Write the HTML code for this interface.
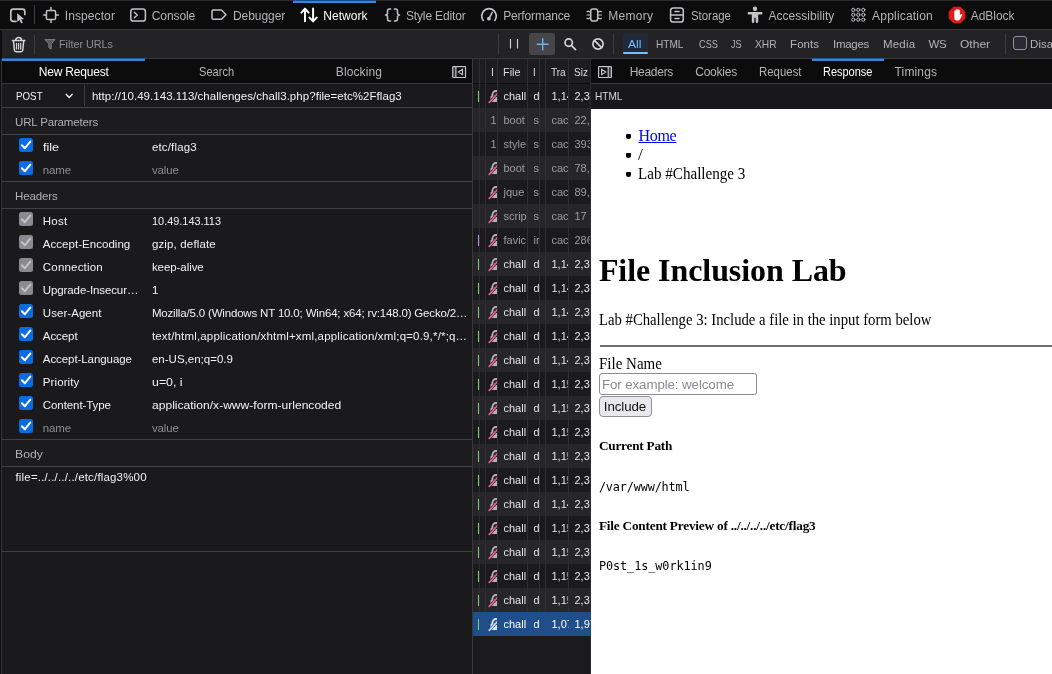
<!DOCTYPE html>
<html lang="en">
<head>
<meta charset="utf-8">
<title>DevTools - Network</title>
<style>
*{box-sizing:border-box;margin:0;padding:0}
html,body{width:1052px;height:674px;overflow:hidden;background:#1a1a1c}
body{position:relative;font-family:"Liberation Sans","DejaVu Sans",sans-serif;font-size:12px;color:#b1b1b3}
.abs{position:absolute}
.t{position:absolute;white-space:nowrap;line-height:16px;height:16px}
svg{position:absolute;overflow:visible}
#topbar{left:0;top:0;width:1052px;height:30px;background:#0c0c0d;border-bottom:1px solid #38383d}
#tb2{left:0;top:30px;width:1052px;height:29px;background:#232326;border-bottom:1px solid #38383d}
.vsep{position:absolute;width:1px;background:#3d3d42}
.hl{position:absolute;height:1px;background:#414146}
.bl{position:absolute;height:2px;background:#2f73c9}
#left{left:0;top:59px;width:473px;height:615px;background:#1a1a1c;border-left:1px solid #0d0d0e;border-right:1px solid #38383d}
.tabrow{position:absolute;top:59px;height:25px;background:#0c0c0d;border-bottom:1px solid #38383d}
.sec{position:absolute;left:2px;width:470px;background:#1c1c1f}
.cb{position:absolute;left:19px;width:14px;height:14px;border-radius:2.5px;background:#0b6be3}
.cb.dis{background:#8a8a90}
.cb svg{left:0;top:0}
#list{left:473px;top:59px;width:118px;height:615px;background:#1b1b1e;overflow:hidden}
.row{position:absolute;left:0;width:118px;height:24px;color:#e4e4e7;font-size:11px;background:#1b1b1e}
svg.lk{overflow:hidden}
.row.odd{background:#262629}
.row.dim{color:#9d9da2}
.row.sel{background:#204e8a;color:#fff}
.row.odd{--rb:#262629}
.row.sel{--rb:#204e8a;--lk:#dfe9f7;--sl:#c9dcf5;z-index:3}
.c{position:absolute;top:0;height:24px;overflow:hidden;white-space:nowrap;line-height:24px}
.c i{font-style:normal;position:absolute;top:0}
.cl{position:absolute;top:59px;width:1px;background:#2e2e32}
.g{position:absolute;left:4.8px;top:7px;width:1.7px;height:11px;background:#7fcf74}
.g.p{background:#c48af2}
#right{left:591px;top:59px;width:461px;height:615px;background:#1a1a1c}
#page{left:591px;top:109px;width:461px;height:565px;background:#fff;color:#000;font-family:"Liberation Serif","DejaVu Serif",serif;font-size:16px;overflow:hidden}
#page .p{position:absolute;white-space:nowrap;line-height:19px}
#page .b{font-weight:bold;font-size:13.28px}
#page .m{font-family:"DejaVu Sans Mono","Liberation Mono",monospace;font-size:11.8px}
.dot{position:absolute;left:34.8px;width:5.5px;height:5.3px;border-radius:1px 1px 2.6px 2.6px;background:#000}
</style>
</head>
<body>
<div id="app" style="position:absolute;left:0;top:0;width:1052px;height:674px;will-change:transform">
<div id="topbar" class="abs"></div>
<div id="tb2" class="abs"></div>
<div id="left" class="abs"></div>
<div id="list" class="abs">
<div class="row" style="top:25px"><div class="g"></div><svg class="lk" style="left:13px;top:0" width="11.3" height="24" viewBox="0 0 11.3 24"><use href="#lock"/></svg><div class="c" style="left:25px;width:30px"><i style="left:5.5px">chall</i></div><div class="c" style="left:55px;width:12px"><i style="left:5.5px">d</i></div><div class="c" style="left:73px;width:23px"><i style="left:5.5px">1,14 kB</i></div><div class="c" style="left:96px;width:22px"><i style="left:5.5px">2,37 kB</i></div></div>
<div class="row odd dim" style="top:49px"><div class="c" style="left:13px;width:12px"><i style="left:4.6px">10.49</i></div><div class="c" style="left:25px;width:30px"><i style="left:5.5px">boot</i></div><div class="c" style="left:55px;width:12px"><i style="left:5.5px">st</i></div><div class="c" style="left:73px;width:23px"><i style="left:5.5px">cac</i></div><div class="c" style="left:96px;width:22px"><i style="left:5.5px">22,</i></div></div>
<div class="row dim" style="top:73px"><div class="c" style="left:13px;width:12px"><i style="left:4.6px">10.49</i></div><div class="c" style="left:25px;width:30px"><i style="left:5.5px">style</i></div><div class="c" style="left:55px;width:12px"><i style="left:5.5px">st</i></div><div class="c" style="left:73px;width:23px"><i style="left:5.5px">cac</i></div><div class="c" style="left:96px;width:22px"><i style="left:5.5px">393</i></div></div>
<div class="row odd dim" style="top:97px"><svg class="lk" style="left:13px;top:0" width="11.3" height="24" viewBox="0 0 11.3 24"><use href="#lock"/></svg><div class="c" style="left:25px;width:30px"><i style="left:5.5px">boot</i></div><div class="c" style="left:55px;width:12px"><i style="left:5.5px">s</i></div><div class="abs" style="left:71.5px;top:15px;width:1.5px;height:1.5px;background:#9d9da2"></div><div class="c" style="left:73px;width:23px"><i style="left:5.5px">cac</i></div><div class="c" style="left:96px;width:22px"><i style="left:5.5px">78,</i></div></div>
<div class="row dim" style="top:121px"><svg class="lk" style="left:13px;top:0" width="11.3" height="24" viewBox="0 0 11.3 24"><use href="#lock"/></svg><div class="c" style="left:25px;width:30px"><i style="left:5.5px">jque</i></div><div class="c" style="left:55px;width:12px"><i style="left:5.5px">s</i></div><div class="abs" style="left:71.5px;top:15px;width:1.5px;height:1.5px;background:#9d9da2"></div><div class="c" style="left:73px;width:23px"><i style="left:5.5px">cac</i></div><div class="c" style="left:96px;width:22px"><i style="left:5.5px">89,</i></div></div>
<div class="row odd dim" style="top:145px"><svg class="lk" style="left:13px;top:0" width="11.3" height="24" viewBox="0 0 11.3 24"><use href="#lock"/></svg><div class="c" style="left:25px;width:30px"><i style="left:5.5px">scrip</i></div><div class="c" style="left:55px;width:12px"><i style="left:5.5px">s</i></div><div class="abs" style="left:71.5px;top:15px;width:1.5px;height:1.5px;background:#9d9da2"></div><div class="c" style="left:73px;width:23px"><i style="left:5.5px">cac</i></div><div class="c" style="left:96px;width:22px"><i style="left:5.5px">17</i></div></div>
<div class="row dim" style="top:169px"><div class="g p"></div><svg class="lk" style="left:13px;top:0" width="11.3" height="24" viewBox="0 0 11.3 24"><use href="#lock"/></svg><div class="c" style="left:25px;width:30px"><i style="left:5.5px">favic</i></div><div class="c" style="left:55px;width:12px"><i style="left:5.5px">ir</i></div><div class="c" style="left:73px;width:23px"><i style="left:5.5px">cac</i></div><div class="c" style="left:96px;width:22px"><i style="left:5.5px">286</i></div></div>
<div class="row odd" style="top:193px"><div class="g"></div><svg class="lk" style="left:13px;top:0" width="11.3" height="24" viewBox="0 0 11.3 24"><use href="#lock"/></svg><div class="c" style="left:25px;width:30px"><i style="left:5.5px">chall</i></div><div class="c" style="left:55px;width:12px"><i style="left:5.5px">d</i></div><div class="c" style="left:73px;width:23px"><i style="left:5.5px">1,14 kB</i></div><div class="c" style="left:96px;width:22px"><i style="left:5.5px">2,37 kB</i></div></div>
<div class="row" style="top:217px"><div class="g"></div><svg class="lk" style="left:13px;top:0" width="11.3" height="24" viewBox="0 0 11.3 24"><use href="#lock"/></svg><div class="c" style="left:25px;width:30px"><i style="left:5.5px">chall</i></div><div class="c" style="left:55px;width:12px"><i style="left:5.5px">d</i></div><div class="c" style="left:73px;width:23px"><i style="left:5.5px">1,14 kB</i></div><div class="c" style="left:96px;width:22px"><i style="left:5.5px">2,37 kB</i></div></div>
<div class="row odd" style="top:241px"><div class="g"></div><svg class="lk" style="left:13px;top:0" width="11.3" height="24" viewBox="0 0 11.3 24"><use href="#lock"/></svg><div class="c" style="left:25px;width:30px"><i style="left:5.5px">chall</i></div><div class="c" style="left:55px;width:12px"><i style="left:5.5px">d</i></div><div class="c" style="left:73px;width:23px"><i style="left:5.5px">1,14 kB</i></div><div class="c" style="left:96px;width:22px"><i style="left:5.5px">2,37 kB</i></div></div>
<div class="row" style="top:265px"><div class="g"></div><svg class="lk" style="left:13px;top:0" width="11.3" height="24" viewBox="0 0 11.3 24"><use href="#lock"/></svg><div class="c" style="left:25px;width:30px"><i style="left:5.5px">chall</i></div><div class="c" style="left:55px;width:12px"><i style="left:5.5px">d</i></div><div class="c" style="left:73px;width:23px"><i style="left:5.5px">1,14 kB</i></div><div class="c" style="left:96px;width:22px"><i style="left:5.5px">2,37 kB</i></div></div>
<div class="row odd" style="top:289px"><div class="g"></div><svg class="lk" style="left:13px;top:0" width="11.3" height="24" viewBox="0 0 11.3 24"><use href="#lock"/></svg><div class="c" style="left:25px;width:30px"><i style="left:5.5px">chall</i></div><div class="c" style="left:55px;width:12px"><i style="left:5.5px">d</i></div><div class="c" style="left:73px;width:23px"><i style="left:5.5px">1,14 kB</i></div><div class="c" style="left:96px;width:22px"><i style="left:5.5px">2,37 kB</i></div></div>
<div class="row" style="top:313px"><div class="g"></div><svg class="lk" style="left:13px;top:0" width="11.3" height="24" viewBox="0 0 11.3 24"><use href="#lock"/></svg><div class="c" style="left:25px;width:30px"><i style="left:5.5px">chall</i></div><div class="c" style="left:55px;width:12px"><i style="left:5.5px">d</i></div><div class="c" style="left:73px;width:23px"><i style="left:5.5px">1,15 kB</i></div><div class="c" style="left:96px;width:22px"><i style="left:5.5px">2,34 kB</i></div></div>
<div class="row odd" style="top:337px"><div class="g"></div><svg class="lk" style="left:13px;top:0" width="11.3" height="24" viewBox="0 0 11.3 24"><use href="#lock"/></svg><div class="c" style="left:25px;width:30px"><i style="left:5.5px">chall</i></div><div class="c" style="left:55px;width:12px"><i style="left:5.5px">d</i></div><div class="c" style="left:73px;width:23px"><i style="left:5.5px">1,15 kB</i></div><div class="c" style="left:96px;width:22px"><i style="left:5.5px">2,34 kB</i></div></div>
<div class="row" style="top:361px"><div class="g"></div><svg class="lk" style="left:13px;top:0" width="11.3" height="24" viewBox="0 0 11.3 24"><use href="#lock"/></svg><div class="c" style="left:25px;width:30px"><i style="left:5.5px">chall</i></div><div class="c" style="left:55px;width:12px"><i style="left:5.5px">d</i></div><div class="c" style="left:73px;width:23px"><i style="left:5.5px">1,15 kB</i></div><div class="c" style="left:96px;width:22px"><i style="left:5.5px">2,37 kB</i></div></div>
<div class="row odd" style="top:385px"><div class="g"></div><svg class="lk" style="left:13px;top:0" width="11.3" height="24" viewBox="0 0 11.3 24"><use href="#lock"/></svg><div class="c" style="left:25px;width:30px"><i style="left:5.5px">chall</i></div><div class="c" style="left:55px;width:12px"><i style="left:5.5px">d</i></div><div class="c" style="left:73px;width:23px"><i style="left:5.5px">1,15 kB</i></div><div class="c" style="left:96px;width:22px"><i style="left:5.5px">2,34 kB</i></div></div>
<div class="row" style="top:409px"><div class="g"></div><svg class="lk" style="left:13px;top:0" width="11.3" height="24" viewBox="0 0 11.3 24"><use href="#lock"/></svg><div class="c" style="left:25px;width:30px"><i style="left:5.5px">chall</i></div><div class="c" style="left:55px;width:12px"><i style="left:5.5px">d</i></div><div class="c" style="left:73px;width:23px"><i style="left:5.5px">1,15 kB</i></div><div class="c" style="left:96px;width:22px"><i style="left:5.5px">2,34 kB</i></div></div>
<div class="row odd" style="top:433px"><div class="g"></div><svg class="lk" style="left:13px;top:0" width="11.3" height="24" viewBox="0 0 11.3 24"><use href="#lock"/></svg><div class="c" style="left:25px;width:30px"><i style="left:5.5px">chall</i></div><div class="c" style="left:55px;width:12px"><i style="left:5.5px">d</i></div><div class="c" style="left:73px;width:23px"><i style="left:5.5px">1,14 kB</i></div><div class="c" style="left:96px;width:22px"><i style="left:5.5px">2,37 kB</i></div></div>
<div class="row" style="top:457px"><div class="g"></div><svg class="lk" style="left:13px;top:0" width="11.3" height="24" viewBox="0 0 11.3 24"><use href="#lock"/></svg><div class="c" style="left:25px;width:30px"><i style="left:5.5px">chall</i></div><div class="c" style="left:55px;width:12px"><i style="left:5.5px">d</i></div><div class="c" style="left:73px;width:23px"><i style="left:5.5px">1,15 kB</i></div><div class="c" style="left:96px;width:22px"><i style="left:5.5px">2,37 kB</i></div></div>
<div class="row odd" style="top:481px"><div class="g"></div><svg class="lk" style="left:13px;top:0" width="11.3" height="24" viewBox="0 0 11.3 24"><use href="#lock"/></svg><div class="c" style="left:25px;width:30px"><i style="left:5.5px">chall</i></div><div class="c" style="left:55px;width:12px"><i style="left:5.5px">d</i></div><div class="c" style="left:73px;width:23px"><i style="left:5.5px">1,15 kB</i></div><div class="c" style="left:96px;width:22px"><i style="left:5.5px">2,34 kB</i></div></div>
<div class="row" style="top:505px"><div class="g"></div><svg class="lk" style="left:13px;top:0" width="11.3" height="24" viewBox="0 0 11.3 24"><use href="#lock"/></svg><div class="c" style="left:25px;width:30px"><i style="left:5.5px">chall</i></div><div class="c" style="left:55px;width:12px"><i style="left:5.5px">d</i></div><div class="c" style="left:73px;width:23px"><i style="left:5.5px">1,15 kB</i></div><div class="c" style="left:96px;width:22px"><i style="left:5.5px">2,34 kB</i></div></div>
<div class="row odd" style="top:529px"><div class="g"></div><svg class="lk" style="left:13px;top:0" width="11.3" height="24" viewBox="0 0 11.3 24"><use href="#lock"/></svg><div class="c" style="left:25px;width:30px"><i style="left:5.5px">chall</i></div><div class="c" style="left:55px;width:12px"><i style="left:5.5px">d</i></div><div class="c" style="left:73px;width:23px"><i style="left:5.5px">1,15 kB</i></div><div class="c" style="left:96px;width:22px"><i style="left:5.5px">2,37 kB</i></div></div>
<div class="row sel" style="top:553px"><div class="g"></div><svg class="lk" style="left:13px;top:0" width="11.3" height="24" viewBox="0 0 11.3 24"><use href="#lock"/></svg><div class="c" style="left:25px;width:30px"><i style="left:5.5px">chall</i></div><div class="c" style="left:55px;width:12px"><i style="left:5.5px">d</i></div><div class="c" style="left:73px;width:23px"><i style="left:5.5px">1,07 kB</i></div><div class="c" style="left:96px;width:22px"><i style="left:5.5px">1,97 kB</i></div></div>
</div>
<div id="right" class="abs"></div>

<!-- top toolbar decorations -->
<div class="abs" style="left:0;top:0;width:1052px;height:1px;background:#2a2a2d"></div>
<div class="abs" style="left:293px;top:0;width:83px;height:1px;background:#0d4a90"></div>
<div class="bl" style="left:293px;top:1px;width:83px;background:#3d85d3"></div>
<div class="abs" style="left:0;top:30px;width:1.500px;height:29px;background:#0d0d0e"></div>
<div class="vsep" style="left:34px;top:5px;height:19px"></div>
<!-- toolbar 2 decorations -->
<div class="vsep" style="left:34px;top:35px;height:19px"></div>
<div class="vsep" style="left:498px;top:34px;height:20px"></div>
<div class="vsep" style="left:613px;top:34px;height:20px"></div>
<div class="vsep" style="left:1005px;top:34px;height:20px"></div>
<div class="abs" style="left:529px;top:33px;width:26px;height:22px;border-radius:3px;background:#45454a"></div>
<div class="abs" style="left:623px;top:34px;width:25px;height:19px;background:#212a3a;border-radius:2px"></div>
<div class="abs" style="left:623px;top:52px;width:25px;height:2px;background:#75bfff;border-radius:1px"></div>
<div class="abs" style="left:1013px;top:36px;width:14px;height:14px;border:1.5px solid #8f8f9d;border-radius:3px;background:#2b2a33"></div>

<!-- left panel -->
<div class="tabrow" style="left:2px;width:470px"></div>
<div class="abs" style="left:1px;top:59px;width:1px;height:615px;background:#36363a"></div>
<div class="abs" style="left:2px;top:58px;width:143px;height:1px;background:#1c5aa6"></div>
<div class="bl" style="left:2px;top:59px;width:143px;background:#3d85d3"></div>
<div class="vsep" style="left:84px;top:85px;height:21px"></div>
<div class="hl" style="left:2px;width:470px;top:107px"></div>
<div class="sec" style="top:108px;height:26px"></div>
<div class="hl" style="left:2px;width:470px;top:134px"></div>
<div class="hl" style="left:2px;width:470px;top:181px"></div>
<div class="sec" style="top:182px;height:26px"></div>
<div class="hl" style="left:2px;width:470px;top:208px"></div>
<div class="hl" style="left:2px;width:470px;top:439px"></div>
<div class="sec" style="top:440px;height:26px"></div>
<div class="hl" style="left:2px;width:470px;top:466px"></div>
<div class="hl" style="left:2px;width:470px;top:551px"></div>

<div class="cb" style="top:138px"><svg width="14" height="14" viewBox="0 0 14 14"><path d="M2.900 7.300l3 2.900 5.400-6.600" fill="none" stroke="#ffffff" stroke-width="2" stroke-linecap="round" stroke-linejoin="round"/></svg></div>
<div class="cb" style="top:161px"><svg width="14" height="14" viewBox="0 0 14 14"><path d="M2.900 7.300l3 2.900 5.400-6.600" fill="none" stroke="#ffffff" stroke-width="2" stroke-linecap="round" stroke-linejoin="round"/></svg></div>
<div class="cb dis" style="top:212px"><svg width="14" height="14" viewBox="0 0 14 14"><path d="M2.900 7.300l3 2.900 5.400-6.600" fill="none" stroke="#c2c2c8" stroke-width="2" stroke-linecap="round" stroke-linejoin="round"/></svg></div>
<div class="cb dis" style="top:235px"><svg width="14" height="14" viewBox="0 0 14 14"><path d="M2.900 7.300l3 2.900 5.400-6.600" fill="none" stroke="#c2c2c8" stroke-width="2" stroke-linecap="round" stroke-linejoin="round"/></svg></div>
<div class="cb dis" style="top:258px"><svg width="14" height="14" viewBox="0 0 14 14"><path d="M2.900 7.300l3 2.900 5.400-6.600" fill="none" stroke="#c2c2c8" stroke-width="2" stroke-linecap="round" stroke-linejoin="round"/></svg></div>
<div class="cb dis" style="top:281px"><svg width="14" height="14" viewBox="0 0 14 14"><path d="M2.900 7.300l3 2.900 5.400-6.600" fill="none" stroke="#c2c2c8" stroke-width="2" stroke-linecap="round" stroke-linejoin="round"/></svg></div>
<div class="cb" style="top:304px"><svg width="14" height="14" viewBox="0 0 14 14"><path d="M2.900 7.300l3 2.900 5.400-6.600" fill="none" stroke="#ffffff" stroke-width="2" stroke-linecap="round" stroke-linejoin="round"/></svg></div>
<div class="cb" style="top:327px"><svg width="14" height="14" viewBox="0 0 14 14"><path d="M2.900 7.300l3 2.900 5.400-6.600" fill="none" stroke="#ffffff" stroke-width="2" stroke-linecap="round" stroke-linejoin="round"/></svg></div>
<div class="cb" style="top:350px"><svg width="14" height="14" viewBox="0 0 14 14"><path d="M2.900 7.300l3 2.900 5.400-6.600" fill="none" stroke="#ffffff" stroke-width="2" stroke-linecap="round" stroke-linejoin="round"/></svg></div>
<div class="cb" style="top:373px"><svg width="14" height="14" viewBox="0 0 14 14"><path d="M2.900 7.300l3 2.900 5.400-6.600" fill="none" stroke="#ffffff" stroke-width="2" stroke-linecap="round" stroke-linejoin="round"/></svg></div>
<div class="cb" style="top:396px"><svg width="14" height="14" viewBox="0 0 14 14"><path d="M2.900 7.300l3 2.900 5.400-6.600" fill="none" stroke="#ffffff" stroke-width="2" stroke-linecap="round" stroke-linejoin="round"/></svg></div>
<div class="cb" style="top:419px"><svg width="14" height="14" viewBox="0 0 14 14"><path d="M2.900 7.300l3 2.900 5.400-6.600" fill="none" stroke="#ffffff" stroke-width="2" stroke-linecap="round" stroke-linejoin="round"/></svg></div>

<!-- list header -->
<div class="abs" style="left:473px;top:59px;width:118px;height:24px;background:#1d1d20"></div>
<div class="hl" style="left:473px;width:118px;top:83px;background:#0f0f10"></div>
<div class="cl" style="left:479px;height:553px"></div>
<div class="cl" style="left:485px;height:553px"></div>
<div class="cl" style="left:497px;height:553px"></div>
<div class="cl" style="left:527px;height:553px"></div>
<div class="cl" style="left:539px;height:553px"></div>
<div class="cl" style="left:545px;height:553px"></div>
<div class="cl" style="left:568px;height:553px"></div>


<!-- right panel -->
<div class="tabrow" style="left:591px;width:461px"></div>
<div class="abs" style="left:812px;top:58px;width:72px;height:1px;background:#1c5aa6"></div>
<div class="bl" style="left:812px;top:59px;width:72px;background:#3d85d3"></div>
<div class="abs" style="left:591px;top:84px;width:461px;height:25px;background:#18181a"></div>
<div class="cl" style="left:590px;height:615px;background:#2c2c30"></div>

<div id="page" class="abs">
<div class="dot" style="top:24.9px"></div>
<div class="dot" style="top:43.9px"></div>
<div class="dot" style="top:62.9px"></div>
<div class="abs" style="left:8.5px;top:236px;width:460px;height:2px;background:#6e6e6e"></div>
<div class="abs" style="left:8px;top:264px;width:158px;height:21.5px;border:1px solid #8c8c96;border-radius:3px;background:#fff"></div>
<div class="abs" style="left:8px;top:286.5px;width:53px;height:21px;border:1px solid #8f8f9d;border-radius:4px;background:#e9e9ed"></div>
</div>

<svg width="0" height="0" style="left:0;top:0"><defs>
<g id="lock"><path d="M6.500 12V10.500a3.500 3.500 0 0 1 7 0V12" fill="none" style="stroke:var(--lk,#b4b4b8)" stroke-width="1.800"/><rect x="4.500" y="11.800" width="11" height="6.200" rx="1" style="fill:var(--lk,#b4b4b8)"/><path d="M3.300 18.400L11.800 9.200" style="stroke:var(--rb,#1b1b1e)" stroke-width="2.800"/><path d="M3.300 18.400L11.800 9.200" style="stroke:var(--sl,#ee5a8e)" stroke-width="1.700" stroke-linecap="round"/></g>
</defs></svg>
<svg width="1052" height="674" viewBox="0 0 1052 674" style="left:0;top:0;pointer-events:none" fill="none" stroke-linecap="round" stroke-linejoin="round">
<g stroke="#c4c4c8" stroke-width="1.5">
<!-- pick -->
<path d="M16 21.3H13.3a2.5 2.5 0 0 1-2.500-2.500V11.600a2.500 2.500 0 0 1 2.500-2.500h9a2.500 2.500 0 0 1 2.500 2.500V14.500" stroke-width="1.700"/>
<path d="M17.2 13.3v8.8l2.3-2 1.700 3.300 1.600-.850-1.600-3.200h3.100z" fill="#c4c4c8" stroke="none"/>
<!-- inspector -->
<rect x="46.4" y="10.4" width="9.2" height="9.2" rx="1.6"/>
<path d="M43.6 15h2M56.4 15h2M51 7.6v2M51 20.4v2"/>
<!-- console -->
<rect x="130.8" y="9.1" width="14.6" height="11.9" rx="2.6"/>
<path d="M134.3 12.3l3 2.7-3 2.7"/>
<!-- debugger -->
<path d="M213.3 10.1h8.2l4.5 4.6-4.5 4.6h-8.2a1.3 1.3 0 0 1-1.3-1.3v-6.6a1.3 1.3 0 0 1 1.3-1.3z"/>
<!-- style editor -->
<path d="M390.6 9.1h-1.1a2 2 0 0 0-2 2v1.9a2 2 0 0 1-2 2 2 2 0 0 1 2 2v1.9a2 2 0 0 0 2 2h1.1"/>
<path d="M394.4 9.1h1.1a2 2 0 0 1 2 2v1.9a2 2 0 0 0 2 2 2 2 0 0 0-2 2v1.9a2 2 0 0 1-2 2h-1.1"/>
<!-- performance -->
<path d="M483.200 20.400A7.300 7.300 0 1 1 494.800 20.400" stroke-width="1.700"/>
<path d="M489 18.600l3.200-6.200"/>
<circle cx="488.9" cy="18.7" r="1.9" fill="#c4c4c8" stroke="none"/>
<!-- memory -->
<rect x="590.7" y="9.1" width="7" height="11.9" rx="2.2"/>
<path d="M587 11.6q1.8-.6 3 .3M587 15h3M587 18.4q1.8.6 3-.3M601.400 11.6q-1.800-.6-3 .3M601.400 15h-3M601.400 18.400q-1.800.6-3-.3" stroke-width="1.2"/>
<!-- storage -->
<rect x="670.6" y="7.9" width="12.7" height="14.2" rx="2.6"/>
<path d="M670.600 15h12.700M675 11.500h4M675 18.500h4"/>
<!-- accessibility -->
<g fill="#c4c4c8" stroke="none">
<circle cx="755" cy="8.700" r="2.200"/>
<path d="M748.800 11.900h12.400a1.200 1.200 0 0 1 0 2.500h-3v7.400a1.250 1.250 0 0 1-2.500 0v-4h-1.400v4a1.250 1.250 0 0 1-2.500 0v-7.400h-3a1.200 1.200 0 0 1 0-2.500z"/>
</g>
<!-- application -->
<g stroke-width="1">
<circle cx="853.300" cy="9.900" r="1.600"/><circle cx="858.300" cy="9.900" r="1.600"/><circle cx="863.300" cy="9.900" r="1.600"/>
<circle cx="853.300" cy="14.800" r="1.600"/><circle cx="858.300" cy="14.800" r="1.600"/><circle cx="863.300" cy="14.800" r="1.600"/>
<circle cx="853.300" cy="19.700" r="1.600"/><circle cx="858.300" cy="19.700" r="1.600"/><circle cx="863.300" cy="19.700" r="1.600"/>
</g>
</g>
<!-- network (active) -->
<g stroke="#ffffff" stroke-width="2">
<path d="M305 21.300V8.800M301.400 12.600l3.600-3.800 3.600 3.800"/>
<path d="M313.100 8.600v12.500M309.500 17.600l3.600 3.800 3.600-3.800"/>
</g>
<!-- adblock -->
<path d="M953.700 7h6.600l4.700 4.700v6.700l-4.700 4.700h-6.600l-4.700-4.700v-6.700z" fill="#e01b1b" stroke="#e01b1b" stroke-width="0.600"/>
<path d="M954.300 15.500v-4.300a.7.700 0 0 1 1.400 0v-1.300a.7.700 0 0 1 1.400 0v-.3a.7.700 0 0 1 1.400 0v.8a.7.700 0 0 1 1.400 0v5.200l1-1.500a.8.800 0 0 1 1.300.8l-2.200 4.300a2.500 2.500 0 0 1-2.200 1.400h-1.300a2.500 2.500 0 0 1-2.200-2.500z" fill="#fff" stroke="none"/>
<!-- toolbar2 icons -->
<g stroke="#d4d4d8" stroke-width="1.500">
<path d="M12.400 40.500h12.400M15.700 40.200a2.900 2.700 0 0 1 5.800 0"/>
<path d="M13.500 41l.9 9a1.900 1.900 0 0 0 1.900 1.700h4.600a1.900 1.900 0 0 0 1.900-1.700l.9-9"/>
<path d="M16.500 43.300v5.800M18.600 43.300v5.800M20.700 43.300v5.800" stroke-width="1.200"/>
</g>
<path d="M45.200 39.600h9.700l-3.700 4.500v5l-2.400-1.500v-3.500z" fill="#58585d" stroke="#85858a" stroke-width="0.9"/>
<path d="M510.500 39v9.500M517.500 39v9.500" stroke="#d0d0d4" stroke-width="1.150" stroke-linecap="butt"/>
<path d="M537.300 44.300h10.800M542.700 38.700v11.200" stroke="#6fb1f2" stroke-width="1.400"/>
<g stroke="#d4d4d8" stroke-width="1.700">
<circle cx="568.700" cy="42.600" r="3.700"/><path d="M571.600 45.600l4 4.100"/>
<circle cx="598" cy="44" r="5.100"/><path d="M594.400 40.400l7.200 7.200"/>
</g>
<!-- chevron -->
<path d="M66.300 94.400l2.900 3.100 2.900-3.100" stroke="#e8e8ea" stroke-width="1.500"/>
<!-- sidebar toggles -->
<rect x="453" y="66.900" width="2.800" height="10.400" fill="#3a3a3f"/>
<rect x="608.300" y="66.900" width="2.800" height="10.400" fill="#3a3a3f"/>
<g stroke="#c4c4c8" stroke-width="1.200" stroke-linejoin="miter">
<rect x="452.700" y="66.600" width="12.800" height="10.900" rx="0.700"/><path d="M455.900 67v10.200M462.500 69.300v5.400l-4.200-2.700z"/>
<rect x="598.600" y="66.600" width="12.800" height="10.900" rx="0.700"/><path d="M608.200 67v10.200M601.600 69.300v5.400l4.200-2.700z"/>
</g>
</svg>

<span class="t" style="left:64.7px;top:8.1px;font-size:12px;color:#b4b4b7;letter-spacing:0.105px;">Inspector</span>
<span class="t" style="left:151.8px;top:8.1px;font-size:12px;color:#b4b4b7;letter-spacing:-0.090px;">Console</span>
<span class="t" style="left:232.9px;top:8.1px;font-size:12px;color:#b4b4b7;letter-spacing:-0.040px;">Debugger</span>
<span class="t" style="left:323.2px;top:8.1px;font-size:12px;color:#ffffff;letter-spacing:0.055px;">Network</span>
<span class="t" style="left:406.0px;top:8.1px;font-size:12px;color:#b4b4b7;letter-spacing:-0.155px;">Style Editor</span>
<span class="t" style="left:503.2px;top:8.1px;font-size:12px;color:#b4b4b7;letter-spacing:-0.164px;">Performance</span>
<span class="t" style="left:608.3px;top:8.1px;font-size:12px;color:#b4b4b7;letter-spacing:0.293px;">Memory</span>
<span class="t" style="left:691.1px;top:8.1px;font-size:12px;color:#b4b4b7;transform:scaleX(0.949);transform-origin:0 50%;">Storage</span>
<span class="t" style="left:768.4px;top:8.1px;font-size:12px;color:#b4b4b7;letter-spacing:0.049px;">Accessibility</span>
<span class="t" style="left:872.1px;top:8.1px;font-size:12px;color:#b4b4b7;letter-spacing:0.198px;">Application</span>
<span class="t" style="left:970.7px;top:8.1px;font-size:12px;color:#b4b4b7;letter-spacing:-0.019px;">AdBlock</span>
<span class="t" style="left:58.8px;top:36.1px;font-size:11.5px;color:#8f8f94;transform:scaleX(0.939);transform-origin:0 50%;">Filter URLs</span>
<span class="t" style="left:628.4px;top:36.1px;font-size:11.5px;color:#75bfff;transform:scaleX(1.048);transform-origin:0 50%;">All</span>
<span class="t" style="left:656.3px;top:36.1px;font-size:11.5px;color:#b4b4b7;transform:scaleX(0.875);transform-origin:0 50%;">HTML</span>
<span class="t" style="left:698.5px;top:36.1px;font-size:11.5px;color:#b4b4b7;transform:scaleX(0.799);transform-origin:0 50%;">CSS</span>
<span class="t" style="left:730.5px;top:36.1px;font-size:11.5px;color:#b4b4b7;transform:scaleX(0.790);transform-origin:0 50%;">JS</span>
<span class="t" style="left:754.7px;top:36.1px;font-size:11.5px;color:#b4b4b7;transform:scaleX(0.894);transform-origin:0 50%;">XHR</span>
<span class="t" style="left:790.1px;top:36.1px;font-size:11.5px;color:#b4b4b7;letter-spacing:0.027px;">Fonts</span>
<span class="t" style="left:833.0px;top:36.1px;font-size:11.5px;color:#b4b4b7;letter-spacing:-0.270px;">Images</span>
<span class="t" style="left:882.9px;top:36.1px;font-size:11.5px;color:#b4b4b7;letter-spacing:0.254px;">Media</span>
<span class="t" style="left:928.5px;top:36.1px;font-size:11.5px;color:#b4b4b7;letter-spacing:-0.366px;">WS</span>
<span class="t" style="left:960.4px;top:36.1px;font-size:11.5px;color:#b4b4b7;transform:scaleX(1.046);transform-origin:0 50%;">Other</span>
<span class="t" style="left:1030.1px;top:36.1px;font-size:11.5px;color:#b4b4b7;">Disable Cache</span>
<span class="t" style="left:38.7px;top:64.1px;font-size:12px;color:#ffffff;letter-spacing:-0.195px;">New Request</span>
<span class="t" style="left:198.9px;top:64.1px;font-size:12px;color:#b4b4b7;transform:scaleX(0.923);transform-origin:0 50%;">Search</span>
<span class="t" style="left:335.8px;top:64.1px;font-size:12px;color:#b4b4b7;letter-spacing:0.105px;">Blocking</span>
<span class="t" style="left:15.9px;top:88.3px;font-size:11.5px;color:#f2f2f4;transform:scaleX(0.850);transform-origin:0 50%;">POST</span>
<span class="t" style="left:91.9px;top:88.3px;font-size:11.5px;color:#f2f2f4;letter-spacing:0.049px;">http://10.49.143.113/challenges/chall3.php?file=etc%2Fflag3</span>
<span class="t" style="left:15.0px;top:114.1px;font-size:11.5px;color:#b1b1b3;letter-spacing:-0.151px;">URL Parameters</span>
<span class="t" style="left:42.8px;top:139.3px;font-size:11.5px;color:#f2f2f4;transform:scaleX(1.095);transform-origin:0 50%;">file</span>
<span class="t" style="left:151.9px;top:139.3px;font-size:11.5px;color:#f2f2f4;letter-spacing:0.168px;">etc/flag3</span>
<span class="t" style="left:42.8px;top:162.3px;font-size:11.5px;color:#8e8e93;letter-spacing:-0.145px;">name</span>
<span class="t" style="left:151.9px;top:162.3px;font-size:11.5px;color:#8e8e93;letter-spacing:-0.140px;">value</span>
<span class="t" style="left:15.0px;top:188.1px;font-size:11.5px;color:#b1b1b3;letter-spacing:-0.110px;">Headers</span>
<span class="t" style="left:42.8px;top:213.1px;font-size:11.5px;color:#f2f2f4;letter-spacing:0.261px;">Host</span>
<span class="t" style="left:151.9px;top:213.1px;font-size:11.5px;color:#f2f2f4;transform:scaleX(0.949);transform-origin:0 50%;">10.49.143.113</span>
<span class="t" style="left:42.8px;top:236.1px;font-size:11.5px;color:#f2f2f4;letter-spacing:0.036px;">Accept-Encoding</span>
<span class="t" style="left:151.9px;top:236.1px;font-size:11.5px;color:#f2f2f4;letter-spacing:0.153px;">gzip, deflate</span>
<span class="t" style="left:42.8px;top:259.1px;font-size:11.5px;color:#f2f2f4;letter-spacing:0.191px;">Connection</span>
<span class="t" style="left:151.9px;top:259.1px;font-size:11.5px;color:#f2f2f4;letter-spacing:-0.062px;">keep-alive</span>
<span class="t" style="left:42.8px;top:282.1px;font-size:11.5px;color:#f2f2f4;letter-spacing:-0.104px;">Upgrade-Insecur…</span>
<span class="t" style="left:152.1px;top:282.1px;font-size:11.5px;color:#f2f2f4;">1</span>
<span class="t" style="left:42.8px;top:305.1px;font-size:11.5px;color:#f2f2f4;letter-spacing:0.053px;">User-Agent</span>
<span class="t" style="left:151.9px;top:305.1px;font-size:11.5px;color:#f2f2f4;letter-spacing:-0.173px;">Mozilla/5.0 (Windows NT 10.0; Win64; x64; rv:148.0) Gecko/2…</span>
<span class="t" style="left:42.8px;top:328.1px;font-size:11.5px;color:#f2f2f4;letter-spacing:-0.062px;">Accept</span>
<span class="t" style="left:151.9px;top:328.1px;font-size:11.5px;color:#f2f2f4;letter-spacing:0.175px;">text/html,application/xhtml+xml,application/xml;q=0.9,*/*;q…</span>
<span class="t" style="left:42.8px;top:351.1px;font-size:11.5px;color:#f2f2f4;letter-spacing:-0.070px;">Accept-Language</span>
<span class="t" style="left:151.9px;top:351.1px;font-size:11.5px;color:#f2f2f4;letter-spacing:0.015px;">en-US,en;q=0.9</span>
<span class="t" style="left:42.8px;top:374.1px;font-size:11.5px;color:#f2f2f4;letter-spacing:0.102px;">Priority</span>
<span class="t" style="left:151.9px;top:374.1px;font-size:11.5px;color:#f2f2f4;transform:scaleX(1.075);transform-origin:0 50%;">u=0, i</span>
<span class="t" style="left:42.8px;top:397.1px;font-size:11.5px;color:#f2f2f4;letter-spacing:-0.079px;">Content-Type</span>
<span class="t" style="left:151.9px;top:397.1px;font-size:11.5px;color:#f2f2f4;transform:scaleX(1.050);transform-origin:0 50%;">application/x-www-form-urlencoded</span>
<span class="t" style="left:42.8px;top:420.1px;font-size:11.5px;color:#8e8e93;letter-spacing:-0.145px;">name</span>
<span class="t" style="left:151.9px;top:420.1px;font-size:11.5px;color:#8e8e93;letter-spacing:-0.140px;">value</span>
<span class="t" style="left:15.0px;top:446.3px;font-size:11.5px;color:#b1b1b3;transform:scaleX(1.064);transform-origin:0 50%;">Body</span>
<span class="t" style="left:15.5px;top:469.3px;font-size:11.5px;color:#f2f2f4;letter-spacing:0.171px;">file=../../../../etc/flag3%00</span>
<span class="t" style="left:629.7px;top:64.1px;font-size:12px;color:#b4b4b7;letter-spacing:-0.280px;">Headers</span>
<span class="t" style="left:695.2px;top:64.1px;font-size:12px;color:#b4b4b7;letter-spacing:-0.223px;">Cookies</span>
<span class="t" style="left:759.1px;top:64.1px;font-size:12px;color:#b4b4b7;transform:scaleX(0.951);transform-origin:0 50%;">Request</span>
<span class="t" style="left:822.7px;top:64.1px;font-size:12px;color:#ffffff;transform:scaleX(0.914);transform-origin:0 50%;">Response</span>
<span class="t" style="left:894.5px;top:64.1px;font-size:12px;color:#b4b4b7;letter-spacing:0.163px;">Timings</span>
<span class="t" style="left:595.2px;top:88.0px;font-size:11.5px;color:#d7d7db;transform:scaleX(0.878);transform-origin:0 50%;">HTML</span>
<span class="t" style="left:638.4px;top:127.8px;font-size:16px;color:#0000ee;letter-spacing:-0.277px;font-family:'Liberation Serif','DejaVu Serif',serif;text-decoration:underline;">Home</span>
<span class="t" style="left:638.4px;top:146.8px;font-size:16px;color:#000000;font-family:'Liberation Serif','DejaVu Serif',serif;transform:scaleX(1.078);transform-origin:0 50%;">/</span>
<span class="t" style="left:638.4px;top:165.8px;font-size:16px;color:#000000;font-family:'Liberation Serif','DejaVu Serif',serif;transform:scaleX(0.944);transform-origin:0 50%;">Lab #Challenge 3</span>
<span class="t" style="left:598.9px;top:262.2px;font-size:32px;color:#000000;letter-spacing:-0.070px;font-weight:bold;font-family:'Liberation Serif','DejaVu Serif',serif;">File Inclusion Lab</span>
<span class="t" style="left:598.9px;top:311.6px;font-size:16px;color:#000000;font-family:'Liberation Serif','DejaVu Serif',serif;transform:scaleX(0.919);transform-origin:0 50%;">Lab #Challenge 3: Include a file in the input form below</span>
<span class="t" style="left:598.9px;top:355.9px;font-size:16px;color:#000000;font-family:'Liberation Serif','DejaVu Serif',serif;transform:scaleX(0.937);transform-origin:0 50%;">File Name</span>
<span class="t" style="left:601.9px;top:377.4px;font-size:13.33px;color:#8a8a90;letter-spacing:-0.099px;">For example: welcome</span>
<span class="t" style="left:603.8px;top:399.0px;font-size:13.33px;color:#111111;letter-spacing:-0.083px;">Include</span>
<span class="t" style="left:598.9px;top:438.3px;font-size:13.28px;color:#000000;letter-spacing:-0.228px;font-weight:bold;font-family:'Liberation Serif','DejaVu Serif',serif;">Current Path</span>
<span class="t" style="left:598.9px;top:478.8px;font-size:11.8px;color:#000000;letter-spacing:-0.134px;font-family:'DejaVu Sans Mono','Liberation Mono',monospace;">/var/www/html</span>
<span class="t" style="left:598.9px;top:517.6px;font-size:13.28px;color:#000000;letter-spacing:-0.208px;font-weight:bold;font-family:'Liberation Serif','DejaVu Serif',serif;">File Content Preview of ../../../../etc/flag3</span>
<span class="t" style="left:598.9px;top:558.0px;font-size:11.8px;color:#000000;letter-spacing:-0.053px;font-family:'DejaVu Sans Mono','Liberation Mono',monospace;">P0st_1s_w0rk1in9</span>
<span class="t" style="left:490.9px;top:63.6px;font-size:11.5px;color:#dcdce0;transform:scaleX(0.905);transform-origin:0 50%;">I</span>
<span class="t" style="left:503.1px;top:63.6px;font-size:11.5px;color:#dcdce0;transform:scaleX(0.944);transform-origin:0 50%;">File</span>
<span class="t" style="left:533.1px;top:63.6px;font-size:11.5px;color:#dcdce0;transform:scaleX(0.843);transform-origin:0 50%;">I</span>
<span class="t" style="left:550.5px;top:63.6px;font-size:11.5px;color:#dcdce0;transform:scaleX(0.874);transform-origin:0 50%;">Tra</span>
<span class="t" style="left:574.0px;top:63.6px;font-size:11.5px;color:#dcdce0;transform:scaleX(0.876);transform-origin:0 50%;">Siz</span>
</div>
</body>
</html>
